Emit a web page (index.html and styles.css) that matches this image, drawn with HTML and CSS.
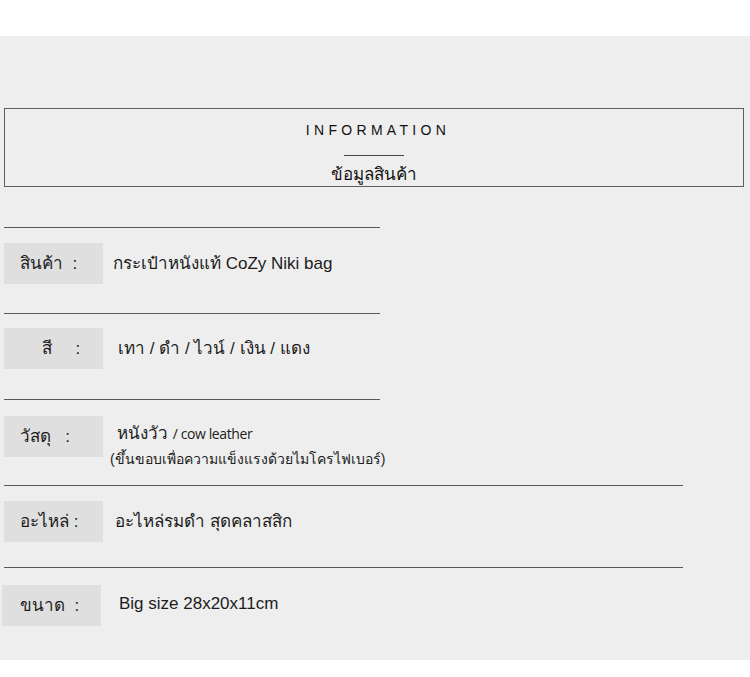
FILE: index.html
```html
<!DOCTYPE html>
<html lang="th">
<head>
<meta charset="utf-8">
<link rel="stylesheet" href="styles.css">
</head>
<body>
<div class="panel">
  <div class="info-box">
    <div class="info-title">INFORMATION</div>
    <div class="info-rule"></div>
    <div class="info-sub">ข้อมูลสินค้า</div>
  </div>

  <div class="rule short r1"></div>
  <div class="row row1">
    <div class="label">สินค้า&nbsp; :</div>
    <div class="value v1">กระเป๋าหนังแท้ CoZy Niki bag</div>
  </div>

  <div class="rule short r2"></div>
  <div class="row row2">
    <div class="label l2">สี&nbsp;&nbsp;&nbsp;&nbsp; :</div>
    <div class="value v2">เทา / ดำ / ไวน์ / เงิน / แดง</div>
  </div>

  <div class="rule short r3"></div>
  <div class="row row3">
    <div class="label">วัสดุ&nbsp;&nbsp; :</div>
    <div class="value v3">
      <div class="v3-main">หนังวัว <span class="v3-en">/ cow leather</span></div>
      <div class="v3-note">(ขึ้นขอบเพื่อความแข็งแรงด้วยไมโครไฟเบอร์)</div>
    </div>
  </div>

  <div class="rule long r4"></div>
  <div class="row row4">
    <div class="label">อะไหล่ :</div>
    <div class="value v4">อะไหล่รมดำ สุดคลาสสิก</div>
  </div>

  <div class="rule long r5"></div>
  <div class="row row5">
    <div class="label l5">ขนาด&nbsp; :</div>
    <div class="value v5">Big size 28x20x11cm</div>
  </div>
</div>
</body>
</html>
```

FILE: styles.css
```css
html, body {
  margin: 0;
  padding: 0;
  background: #ffffff;
}

body {
  padding-top: 36px;
  font-family: "Liberation Sans", Arial, "Noto Sans", sans-serif;
  color: #1c1c1c;
}

.panel {
  background: #eeeeee;
  height: 624px;
  display: flex;
  flex-direction: column;
  box-sizing: border-box;
  padding-top: 72px;
}

.info-box {
  margin-left: 4px;
  width: 740px;
  height: 79px;
  flex-shrink: 0;
  box-sizing: border-box;
  border: 1px solid #5e5e5e;
  display: flex;
  flex-direction: column;
  align-items: center;
}

.info-title {
  margin-top: 13px;
  font-size: 14px;
  line-height: 16px;
  letter-spacing: 4.3px;
  padding-left: 8px;
  color: #111111;
}

.info-rule {
  margin-top: 17px;
  width: 60px;
  height: 1px;
  background: #444444;
}

.info-sub {
  margin-top: 8px;
  font-size: 17px;
  line-height: 22px;
  color: #111111;
}

.rule {
  height: 1px;
  flex-shrink: 0;
  background: #5a5a5a;
  margin-left: 4px;
}

.short { width: 376px; }
.long { width: 679px; }

.r1 { margin-top: 40px; }
.r2 { margin-top: 29px; }
.r3 { margin-top: 30px; }
.r4 { margin-top: 28px; }
.r5 { margin-top: 25px; }

.row {
  display: flex;
  align-items: flex-start;
  height: 41px;
  flex-shrink: 0;
}

.row1 { margin-top: 15px; }
.row2 { margin-top: 14px; }
.row3 { margin-top: 16px; }
.row4 { margin-top: 15px; }
.row5 { margin-top: 17px; }

.label {
  width: 99px;
  height: 41px;
  margin-left: 4px;
  background: #dfdfdf;
  box-sizing: border-box;
  padding-left: 16px;
  font-size: 17px;
  line-height: 42px;
  white-space: nowrap;
  color: #1c1c1c;
}

.l2 { padding-left: 38px; }
.l5 { margin-left: 2px; padding-left: 18px; }

.value {
  font-size: 17px;
  line-height: 42px;
  color: #1c1c1c;
  white-space: nowrap;
}

.v1 { margin-left: 10px; }
.v2 { margin-left: 15px; }
.v4 { margin-left: 12px; }
.v5 { margin-left: 18px; line-height: 38px; }

.v3 { margin-left: 7px; line-height: normal; }
.v3-main {
  padding-left: 7px;
  font-size: 17px;
  line-height: 36px;
}
.v3-en {
  font-family: "Open Sans", "Noto Sans", sans-serif;
  font-size: 14px;
  letter-spacing: -0.4px;
}
.v3-note {
  font-size: 14px;
  line-height: 14px;
}
```
